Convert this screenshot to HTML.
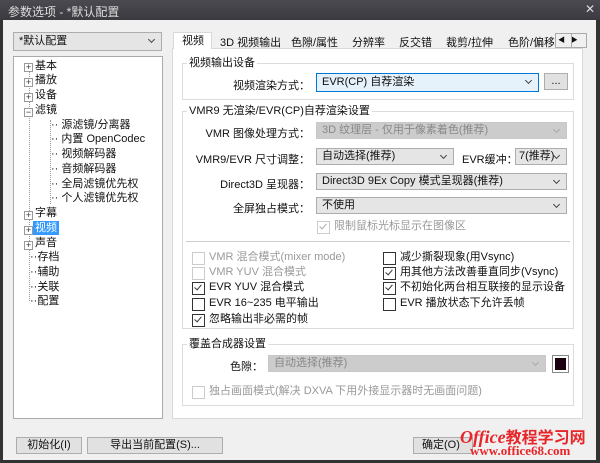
<!DOCTYPE html>
<html><head><meta charset="utf-8"><style>
*{box-sizing:border-box;margin:0;padding:0}
body{width:600px;height:463px;overflow:hidden;background:#333;font-family:"Liberation Sans","Noto Sans CJK SC",sans-serif;font-size:11px;color:#111;position:relative}
.a{position:absolute;white-space:nowrap}
.r{position:absolute;white-space:nowrap;right:290px;text-align:right}
.win{position:absolute;left:3px;top:20px;width:593px;height:440px;background:#f0f0f0}
.combo{position:absolute;border:1px solid #adadad;background:#e5e5e5;height:17px;line-height:15px;padding-left:5px;white-space:nowrap;overflow:hidden}
.combo:after{content:"";position:absolute;right:7px;top:4px;width:4px;height:4px;border-right:1px solid #444;border-bottom:1px solid #444;transform:rotate(45deg)}
.dis{background:#ccc;color:#888;border-color:#c8c8c8}
.dis:after{border-color:#aaa}
.grp{position:absolute;border:1px solid #dcdcdc}
.gl{position:absolute;background:#fff;padding:0 2px;top:-8px;left:4px;line-height:14px;white-space:nowrap}
.cb{position:absolute;white-space:nowrap;padding-left:17px;line-height:13px}
.cb:before{content:"";position:absolute;left:0;top:1px;width:11px;height:11px;border:1px solid #333;background:#fff}
.cb.c:after{content:"";position:absolute;left:4px;top:2px;width:3px;height:6px;border-right:1px solid #333;border-bottom:1px solid #333;transform:rotate(40deg)}
.cb.d{color:#999}.cb.d:before{border-color:#ccc}.cb.d.c:after{border-color:#aaa}
.btn{position:absolute;border:1px solid #adadad;background:#e1e1e1;height:17px;line-height:15px;text-align:center;white-space:nowrap}
.tree div{position:absolute;white-space:nowrap;line-height:14px}
.pm{position:absolute;width:9px;height:9px;border:1px solid #999;background:#fff;font-size:9px;line-height:7px;text-align:center;color:#333}
</style></head><body>
<div class="a" style="left:0;top:0;width:600px;height:20px;background:linear-gradient(#4a4a50,#3a3a40)"></div>
<div class="a" style="left:8px;top:3px;color:#ddd;font-size:12px">参数选项 - *默认配置</div>
<div class="a" style="left:585px;top:2px;color:#ddd;font-size:12px">✕</div>
<div class="win"></div>
<div class="combo" style="left:13px;top:32px;width:149px;height:19px;line-height:17px">*默认配置</div>
<div class="a tree" style="left:13px;top:56px;width:150px;height:363px;background:#fff;border:1px solid #aaa">
<div style="left:15px;top:14px;height:182px;border-left:1px dotted #999;width:1px"></div>
<div style="left:36px;top:63px;height:84px;border-left:1px dotted #999;width:1px"></div>
<div style="left:15px;top:162px;height:82px;border-left:1px dotted #999;width:1px"></div>
<span class="pm" style="left:10px;top:6px">+</span><div style="left:21px;top:2px">基本</div>
<span class="pm" style="left:10px;top:21px">+</span><div style="left:21px;top:16px">播放</div>
<span class="pm" style="left:10px;top:36px">+</span><div style="left:21px;top:31px">设备</div>
<span class="pm" style="left:10px;top:51px">−</span><div style="left:21px;top:46px">滤镜</div>
<div style="left:37px;top:61px">·· 源滤镜/分离器</div>
<div style="left:37px;top:75px">·· 内置 OpenCodec</div>
<div style="left:37px;top:90px">·· 视频解码器</div>
<div style="left:37px;top:105px">·· 音频解码器</div>
<div style="left:37px;top:120px">·· 全局滤镜优先权</div>
<div style="left:37px;top:134px">·· 个人滤镜优先权</div>
<span class="pm" style="left:10px;top:154px">+</span><div style="left:21px;top:149px">字幕</div>
<span class="pm" style="left:10px;top:169px">+</span><div style="left:19px;top:164px;background:#3399ff;color:#fff;padding:0 2px">视频</div>
<span class="pm" style="left:10px;top:184px">+</span><div style="left:21px;top:179px">声音</div>
<div style="left:16px;top:193px">··存档</div>
<div style="left:16px;top:208px">··辅助</div>
<div style="left:16px;top:223px">··关联</div>
<div style="left:16px;top:237px">··配置</div>
</div>
<div class="a" style="left:172px;top:48px;width:411px;height:371px;background:#fff;border:1px solid #d9d9d9"></div>
<div class="a" style="left:173px;top:32px;width:39px;height:17px;background:#fff;border:1px solid #d9d9d9;border-bottom:none;padding-left:8px;line-height:16px">视频</div>
<div class="a" style="left:220px;top:34px">3D 视频输出</div>
<div class="a" style="left:291px;top:34px">色隙/属性</div>
<div class="a" style="left:352px;top:34px">分辨率</div>
<div class="a" style="left:399px;top:34px">反交错</div>
<div class="a" style="left:446px;top:34px">裁剪/拉伸</div>
<div class="a" style="left:508px;top:34px;width:46px;overflow:hidden">色阶/偏移</div>
<div class="a" style="left:555px;top:33px;width:32px;height:15px;background:#f0f0f0;border:1px solid #aaa;font-size:7px;line-height:13px">&nbsp;◀ &nbsp;&nbsp;▶</div>
<div class="a" style="left:571px;top:33px;width:1px;height:15px;background:#aaa"></div>
<div class="grp" style="left:182px;top:63px;width:392px;height:37px"><span class="gl">视频输出设备</span></div>
<div class="r" style="top:77px">视频渲染方式：</div>
<div class="combo" style="left:316px;top:73px;width:223px;height:19px;line-height:17px;background:#e5f1fb;border-color:#0078d7">EVR(CP) 自荐渲染</div>
<div class="btn" style="left:544px;top:73px;width:24px">...</div>
<div class="grp" style="left:182px;top:111px;width:392px;height:218px"><span class="gl">VMR9 无渲染/EVR(CP)自荐渲染设置</span></div>
<div class="r" style="top:125px">VMR 图像处理方式：</div>
<div class="combo dis" style="left:316px;top:122px;width:251px">3D 纹理层 - 仅用于像素着色(推荐)</div>
<div class="r" style="top:151px">VMR9/EVR 尺寸调整：</div>
<div class="combo" style="left:316px;top:148px;width:138px">自动选择(推荐)</div>
<div class="a" style="left:462px;top:151px">EVR缓冲：</div>
<div class="combo" style="left:515px;top:148px;width:52px;padding-left:3px">7(推荐)</div>
<div class="r" style="top:176px">Direct3D 呈现器：</div>
<div class="combo" style="left:316px;top:173px;width:251px">Direct3D 9Ex Copy 模式呈现器(推荐)</div>
<div class="r" style="top:200px">全屏独占模式：</div>
<div class="combo" style="left:316px;top:197px;width:251px">不使用</div>
<div class="cb d c" style="left:317px;top:220px">限制鼠标光标显示在图像区</div>
<div class="a" style="left:186px;top:241px;width:384px;height:1px;background:#ccc"></div>
<div class="cb d" style="left:192px;top:251px">VMR 混合模式(mixer mode)</div>
<div class="cb d" style="left:192px;top:266px">VMR YUV 混合模式</div>
<div class="cb c" style="left:192px;top:281px">EVR YUV 混合模式</div>
<div class="cb" style="left:192px;top:297px">EVR 16~235 电平输出</div>
<div class="cb c" style="left:192px;top:313px">忽略输出非必需的帧</div>
<div class="cb" style="left:383px;top:251px">减少撕裂现象(用Vsync)</div>
<div class="cb c" style="left:383px;top:266px">用其他方法改善垂直同步(Vsync)</div>
<div class="cb c" style="left:383px;top:281px">不初始化两台相互联接的显示设备</div>
<div class="cb" style="left:383px;top:297px">EVR 播放状态下允许丢帧</div>
<div class="grp" style="left:182px;top:344px;width:392px;height:62px"><span class="gl">覆盖合成器设置</span></div>
<div class="a" style="left:230px;top:358px">色隙：</div>
<div class="combo dis" style="left:268px;top:355px;width:278px">自动选择(推荐)</div>
<div class="a" style="left:552px;top:355px;width:17px;height:18px;border:1px solid #888;background:#fff;padding:2px"><div style="width:100%;height:100%;background:#1a0010"></div></div>
<div class="cb d" style="left:192px;top:385px">独占画面模式(解决 DXVA 下用外接显示器时无画面问题)</div>
<div class="btn" style="left:16px;top:437px;width:66px">初始化(I)</div>
<div class="btn" style="left:87px;top:437px;width:136px">导出当前配置(S)...</div>
<div class="btn" style="left:413px;top:437px;width:60px;text-align:left;padding-left:8px">确定(O)</div>
<div class="a" style="left:460px;top:424px;color:#e8262a;font:italic bold 18px 'Liberation Serif','Noto Sans CJK SC',serif">Office<span style="font-style:normal;font-size:16px">教程学习网</span></div>
<div class="a" style="left:470px;top:443px;color:#e8262a;font:bold 13px 'Liberation Serif',serif">www.office68.com</div>
</body></html>
